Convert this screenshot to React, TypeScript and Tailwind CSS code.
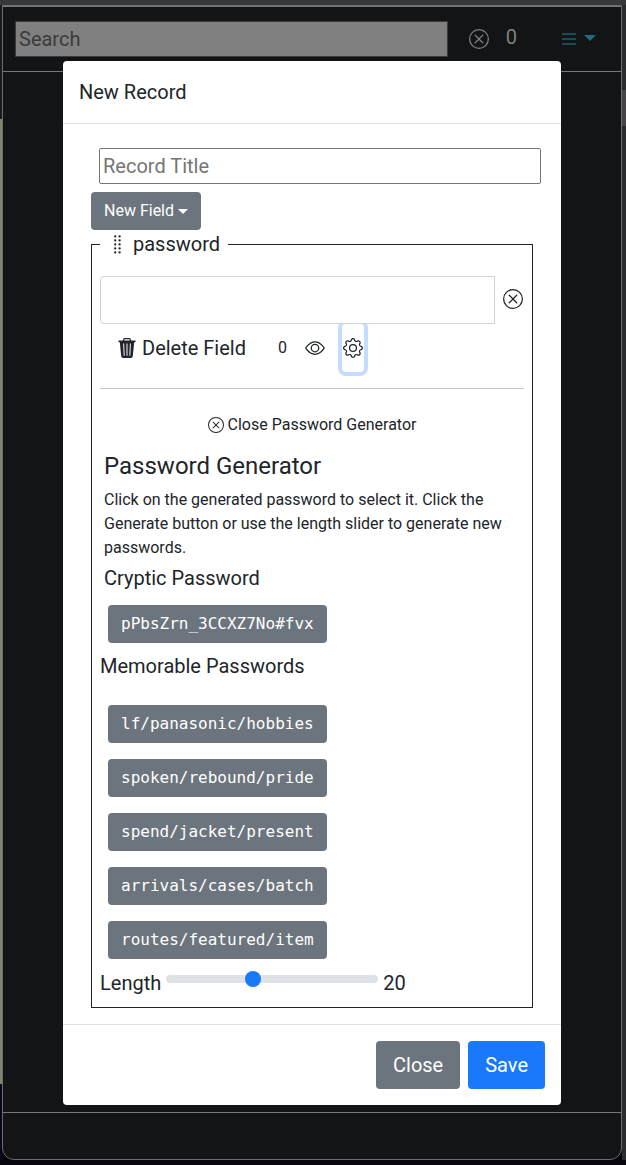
import React, { useState } from 'react';
import { BsXCircle, BsEye, BsGear } from 'react-icons/bs';

const memorable = [
  'lf/panasonic/hobbies',
  'spoken/rebound/pride',
  'spend/jacket/present',
  'arrivals/cases/batch',
  'routes/featured/item',
];

function Caret({ className }: { className: string }) {
  return (
    <svg className={className} viewBox="0 0 10 5" fill="currentColor" aria-hidden="true">
      <path d="M0 0h10L5 5z" />
    </svg>
  );
}

function DragHandle() {
  return (
    <svg className="h-5 w-[7px]" viewBox="0 0 7 20" fill="currentColor" aria-hidden="true">
      {[1.4, 5.4, 9.4, 13.4, 17.4].map((y) => (
        <g key={y}>
          <circle cx="1.2" cy={y} r="1.15" />
          <circle cx="5.6" cy={y} r="1.15" />
        </g>
      ))}
    </svg>
  );
}

function TrashIcon() {
  return (
    <svg className="h-5 w-[18px]" viewBox="0 0 18 20" fill="none" aria-hidden="true">
      <path d="M5.6 3V1.9c0-.7.5-1.2 1.2-1.2h4.4c.7 0 1.2.5 1.2 1.2V3" stroke="currentColor" strokeWidth="1.2" />
      <path
        d="M1 2.6h16c.4 0 .6.2.6.5v.7c0 .3-.2.5-.6.5h-.8l-1.4 13.6c-.1 1.2-1 2-2.1 2H5.3c-1.1 0-2-.8-2.1-2L1.8 4.3H1c-.4 0-.6-.2-.6-.5v-.7c0-.3.2-.5.6-.5z"
        fill="currentColor"
      />
      <path d="M5.6 6l.6 11.2M9 6v11.2M12.4 6l-.6 11.2" stroke="#c4c6c8" strokeWidth="1.3" strokeLinecap="round" />
    </svg>
  );
}

function PasswordButton({ text }: { text: string }) {
  return (
    <button
      type="button"
      className="flex h-[38px] items-center rounded bg-[#6c757d] px-[13px] font-['DejaVu_Sans_Mono',monospace] text-base text-white"
    >
      {text}
    </button>
  );
}

function AppWindow() {
  return (
    <div className="col-start-1 row-start-1 flex flex-col bg-black">
      <div className="h-[5px] bg-[#38383c]" />
      <div className="flex flex-1">
        <div className="flex w-[2px] flex-col">
          <div className="h-[114px] bg-[#1b1b1d]" />
          <div className="h-[965px] bg-[#83856c]" />
          <div className="flex-1 bg-[#0c0618]" />
        </div>
        <div className="flex flex-1 flex-col rounded-b-xl border border-[#6b6c6e] bg-[#121416]">
          <header className="flex h-[66px] items-center border-y border-[#77787a] pr-[25px] pl-3">
            <input
              aria-label="Search"
              placeholder="Search"
              className="h-9 min-w-0 flex-1 border border-[#3b3b3b] bg-[#808080] px-[3px] text-[20px] placeholder:text-[#3b3b3b]"
            />
            <button type="button" aria-label="Clear search" className="ml-[21px] text-[#808080]">
              <BsXCircle className="size-5" />
            </button>
            <span className="mb-1 ml-[17px] text-[20px] text-[#808080]">0</span>
            <button type="button" aria-label="Menu" className="ml-[45px] flex items-center gap-2 text-[#1b6c7c]">
              <svg className="h-3 w-[14px]" viewBox="0 0 14 12" fill="#174c58" aria-hidden="true">
                <path d="M0 0h14v2H0zM0 5h14v2H0zM0 10h14v2H0z" />
              </svg>
              <Caret className="mb-0.5 h-[6px] w-3" />
            </button>
          </header>
          <main className="flex-1" />
          <footer className="h-[47px] border-t border-[#77787a]" />
        </div>
        <div className="w-1 bg-[#2b2c30]">
          <div className="mt-[85px] h-9 bg-[#464446]" />
        </div>
      </div>
      <div className="h-[5px] bg-[#09060f]" />
    </div>
  );
}

export default function App() {
  const [length, setLength] = useState(20);
  return (
    <div className="grid min-h-screen grid-cols-1 font-[Roboto,sans-serif] text-[#212529]">
      <AppWindow />
      <div className="z-10 col-start-1 row-start-1 pt-[61px] pr-[65px] pb-[60px] pl-[63px]">
        <div role="dialog" aria-labelledby="dialog-title" className="rounded bg-white">
          <div className="border-b border-[#dee2e6] p-4">
            <h5 id="dialog-title" className="text-[20px] leading-[30px]">New Record</h5>
          </div>
          <div className="px-7 pt-6 pb-4">
            <input
              aria-label="Record Title"
              placeholder="Record Title"
              className="ml-2 block h-9 w-full rounded-xs border border-[#767676] px-[3px] text-[20px] placeholder:text-[#757575]"
            />
            <button
              type="button"
              className="mt-2 flex h-[38px] items-center gap-1 rounded bg-[#6c757d] px-[13px] text-base text-white"
            >
              New Field
              <Caret className="h-[5px] w-[10px]" />
            </button>
            <fieldset className="border border-[#212529] px-2 pb-2">
              <legend className="flex items-center gap-3 pr-2 pl-[14px] text-[20px] leading-[29px]">
                <DragHandle />
                password
              </legend>
              <div className="mt-[17px] flex items-center gap-2">
                <input
                  aria-label="password"
                  className="relative z-10 h-12 min-w-0 flex-1 rounded-l border border-[#ced4da] bg-white px-4 text-[20px]"
                />
                <button type="button" aria-label="Clear password" className="mr-px mb-0.5">
                  <BsXCircle className="size-5" />
                </button>
              </div>
              <div className="flex h-12 items-center pl-[18px]">
                <button type="button" className="flex items-center gap-[6px] text-[20px]">
                  <TrashIcon />
                  Delete Field
                </button>
                <span className="ml-8 text-base">0</span>
                <button type="button" aria-label="Show password" className="ml-[18px]">
                  <BsEye className="size-5" />
                </button>
                <button
                  type="button"
                  aria-label="Password settings"
                  className="ml-[17px] flex h-12 items-center rounded px-px ring-4 ring-[#c6dcfc]"
                >
                  <BsGear className="size-5" />
                </button>
              </div>
              <hr className="mt-4 border-[#c7c8c9]" />
              <button type="button" className="mx-auto mt-4 flex h-10 items-center gap-1 text-base">
                <BsXCircle className="size-4" />
                Close Password Generator
              </button>
              <div className="px-1 pt-[7px]">
                <h4 className="text-2xl leading-[29px]">Password Generator</h4>
                <p className="mt-[7px] text-base leading-6">
                  Click on the generated password to select it. Click the Generate button or use the length slider to
                  generate new passwords.
                </p>
                <h5 className="mt-[3px] text-[20px] leading-[30px]">Cryptic Password</h5>
              </div>
              <div className="mt-3 ml-2">
                <PasswordButton text="pPbsZrn_3CCXZ7No#fvx" />
              </div>
              <h5 className="mt-2 text-[20px] leading-[30px]">Memorable Passwords</h5>
              <ul className="mt-6 ml-2 flex flex-col gap-4">
                {memorable.map((m) => (
                  <li key={m}>
                    <PasswordButton text={m} />
                  </li>
                ))}
              </ul>
              <div className="mt-2 flex items-center text-[20px] leading-[30px]">
                <label htmlFor="length">Length</label>
                <input
                  id="length"
                  type="range"
                  min={8}
                  max={38}
                  value={length}
                  onChange={(e) => setLength(Number(e.target.value))}
                  className="mx-[5px] mb-2 h-6 w-[212px] appearance-none bg-transparent [&::-webkit-slider-runnable-track]:h-2 [&::-webkit-slider-runnable-track]:rounded-full [&::-webkit-slider-runnable-track]:bg-[#dee2e6] [&::-webkit-slider-thumb]:-mt-1 [&::-webkit-slider-thumb]:size-4 [&::-webkit-slider-thumb]:appearance-none [&::-webkit-slider-thumb]:rounded-full [&::-webkit-slider-thumb]:bg-[#1a78fb]"
                />
                <output htmlFor="length">{length}</output>
              </div>
            </fieldset>
          </div>
          <div className="flex justify-end gap-2 border-t border-[#dee2e6] p-4">
            <button type="button" className="h-12 rounded bg-[#6c757d] px-[17px] text-[20px] text-white">
              Close
            </button>
            <button type="button" className="h-12 rounded bg-[#1a78fb] px-[17px] text-[20px] text-white">
              Save
            </button>
          </div>
        </div>
      </div>
    </div>
  );
}
